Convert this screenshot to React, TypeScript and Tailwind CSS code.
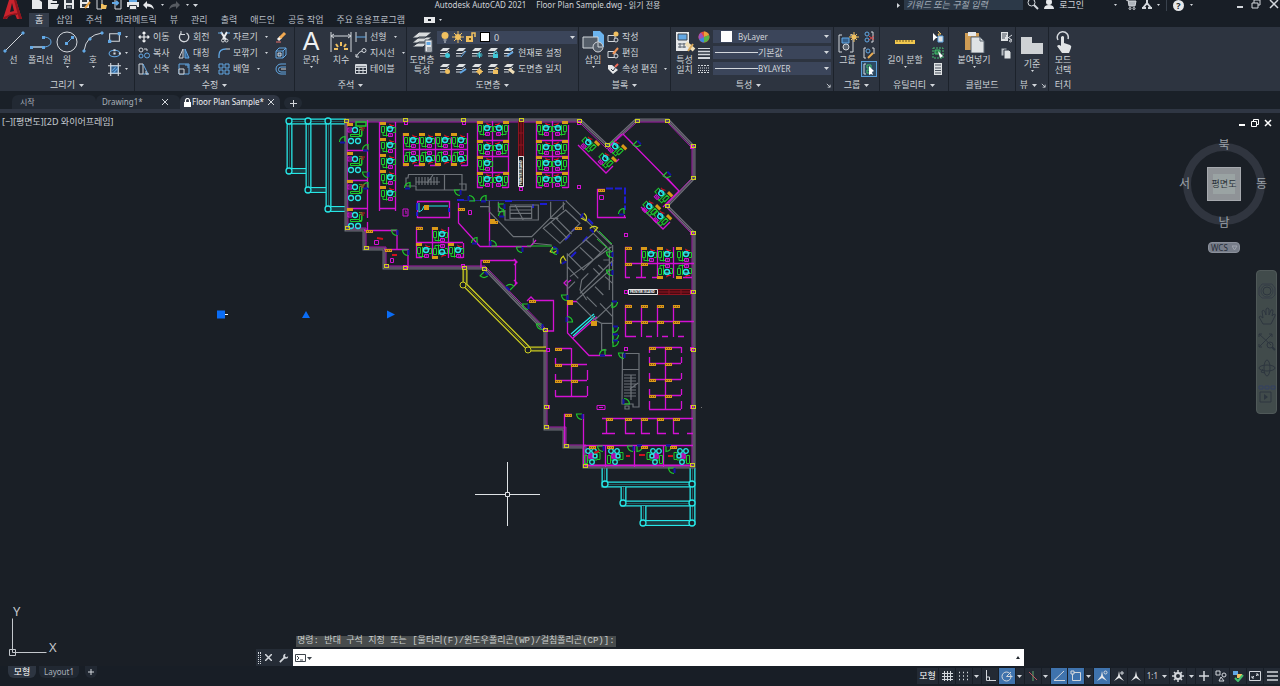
import { ReactNode } from 'react';

type IconProps = {
    children: ReactNode,
    size?: number,
    box?: number
}

function Icon({ children, size = 12, box = 12 }: IconProps) {
    return (
        <svg width={size} height={size} viewBox={`0 0 ${box} ${box}`} fill="none" stroke="#d3d7dc" strokeWidth="1" className="shrink-0" aria-hidden="true">
            {children}
        </svg>
    )
}

function Caret() {
    return (
        <svg width="5" height="3" viewBox="0 0 5 3" className="shrink-0" aria-hidden="true">
            <path d="M0 0h5L2.500 3z" fill="#d3d7dc" />
        </svg>
    )
}

function TinyCaret() {
    return (
        <svg width="3" height="2" viewBox="0 0 3 2" className="shrink-0" aria-hidden="true">
            <path d="M0 0h3L1.500 2z" fill="#d3d7dc" />
        </svg>
    )
}

/* ---------- icons ---------- */

const BLUE = '#62a8e5';
const GOLD = '#f0c060';

const quickIcons: { name: string, art: ReactNode }[] = [
    { name: '새로 만들기', art: <path d="M1 0h6l4 3v7H1z" fill="#e6e8ea" stroke="none" /> },
    { name: '열기', art: <path d="M1 10V1h4l1 1h4v2H4L1 10l2-5h9l-2 5z" fill="#e6e8ea" stroke="none" /> },
    { name: '저장', art: <><path d="M1 0h10v10H1z" fill="#e6e8ea" stroke="none" /><path d="M3 1h6v3H3zM3 6h6v4H3z" fill="#303842" stroke="none" /><path d="M4 8h4" /></> },
    { name: '다른 이름으로 저장', art: <><path d="M1 0h9v9H1z" fill="#e6e8ea" stroke="none" /><path d="M3 1h5v2H3zM3 5h5v3H3z" fill="#303842" stroke="none" /><path d="M6 9l5-6" stroke="#e5a040" strokeWidth="2" /></> },
    { name: '웹에서 열기', art: <><path d="M2 0h5v10H2z" /><path d="M6 9V5h2l1 1h3l-1 4H6z" fill={GOLD} stroke="none" /></> },
    { name: '웹에 저장', art: <><path d="M4 0h6v10H4z" /><path d="M1 4h6M5 2l2 2-2 2" stroke={BLUE} strokeWidth="2" /></> },
    { name: '플롯', art: <><path d="M0 3h12v5H0z" fill="#e6e8ea" stroke="none" /><path d="M2 0h8v3H2z" fill={BLUE} stroke="none" /><path d="M2.500 6.500h7v4h-7z" fill="#e6e8ea" stroke="#303842" /></> },
];

function Undo({ dim }: { dim?: boolean }) {
    return (
        <svg width="12" height="9" viewBox="0 0 12 9" className={dim ? 'shrink-0 -scale-x-100 opacity-30' : 'shrink-0'} aria-hidden="true">
            <path d="M0 4l4-4v2.500q6 0 7 6-2.500-3-7-3V8z" fill="#e6e8ea" />
        </svg>
    )
}

/* sheets of paper stacked, base of every layer icon */
function Sheets({ badge, children }: { badge?: string, children?: ReactNode }) {
    return (
        <Icon>
            <path d="M4 1h7L8 4H1z" fill="#dfe2e4" stroke="none" />
            <path d="M1 6.500h6L10 4M1 9h5" />
            {badge && <circle cx="8.500" cy="8.500" r="2.500" fill={badge} stroke="none" />}
            {children}
        </Icon>
    )
}

const moveIcon = <Icon><path d="M6 1v10M1 6h10M4.500 2.500L6 1l1.500 1.500M4.500 9.500L6 11l1.500-1.500M2.500 4.500L1 6l1.500 1.500M9.500 4.500L11 6 9.500 7.500" stroke="#f0f2f4" strokeWidth="1.200" /></Icon>;
const copyIcon = <Icon><circle cx="3" cy="3" r="2" /><path d="M6 2h3v2" /><circle cx="3" cy="9" r="2" stroke={BLUE} /><circle cx="9" cy="8.500" r="2.500" stroke={BLUE} /></Icon>;
const stretchIcon = <Icon><path d="M1 1h4v10H1z" /><path d="M5 1l5 10H5" stroke={BLUE} /><path d="M8 8v3h3" /></Icon>;
const rotateIcon = <Icon><path d="M8.500 2A4.700 4.700 0 1 1 3 2.500" strokeWidth="1.300" /><path d="M3 0v3.500h4" /></Icon>;
const mirrorIcon = <Icon><path d="M5 2v9H1z" /><path d="M7 2v9h4z" fill="#35608c" stroke={BLUE} /></Icon>;
const scaleIcon = <Icon><path d="M1 1h10v10H1z" stroke={BLUE} /><path d="M1 6h5v5H1z" fill="#2d3440" /><path d="M7 2h3v3" stroke={BLUE} /></Icon>;
const trimIcon = <Icon><path d="M3 1l5 8M9 1L5 8" strokeWidth="2" stroke="#eceef0" /><circle cx="8.500" cy="9.500" r="1.500" /><circle cx="5" cy="9.500" r="1.500" /><path d="M0 2h4M9 2h3" stroke={BLUE} /></Icon>;
const filletIcon = <Icon><path d="M1 11V8q0-6 7-6" stroke={BLUE} strokeWidth="1.300" /><path d="M8 2h4" /></Icon>;
const arrayIcon = <Icon><path d="M1 1h4v4H1zM7 1h4v4H7zM1 7h4v4H1zM7 7h4v4H7z" stroke={BLUE} /></Icon>;
const eraseIcon = <Icon><path d="M1 11h5" stroke="#e96f68" /><path d="M3 9l3-3" stroke="#f7f2ec" strokeWidth="3" /><path d="M5 7l5-5" stroke="#f0a850" strokeWidth="3" /></Icon>;
const explodeIcon = <Icon><path d="M1 4h7v7H1zM1 4l3-3h7v7l-3 3M8 4l3-3" stroke={BLUE} /><path d="M3 6h3v3H3z" fill="#35608c" /></Icon>;
const offsetIcon = <Icon><path d="M11 1H6a5 5 0 0 0 0 10h5M11 4H6a2 2 0 0 0 0 5h5" stroke={BLUE} /><path d="M11 6H6" /></Icon>;

/* ---------- ribbon parts ---------- */

type PanelProps = {
    title: string,
    className: string,
    arrow?: boolean,
    launcher?: boolean,
    children: ReactNode
}

function Panel({ title, className, arrow = true, launcher, children }: PanelProps) {
    return (
        <section aria-label={title} className={`flex shrink-0 flex-col border-r border-[#1c222b] ${className}`}>
            <div className="flex h-[50px]">{children}</div>
            <div className="flex h-[14px] items-center pt-0.5">
                <button className="flex flex-1 items-center justify-center gap-1">
                    {title}
                    {arrow && <Caret />}
                </button>
                {launcher && (
                    <button aria-label={`${title} 설정`} className="pr-0.5">
                        <Icon size={5} box={6}><path d="M1 1l4 4M5 2v3H2" /></Icon>
                    </button>
                )}
            </div>
        </section>
    )
}

type BigButtonProps = {
    label: string,
    second?: string,
    className: string,
    caret?: boolean,
    children: ReactNode
}

function BigButton({ label, second, className, caret, children }: BigButtonProps) {
    return (
        <button className={`flex shrink-0 flex-col items-center pt-1 leading-[10px] whitespace-nowrap ${className}`}>
            <Icon size={22} box={22}>{children}</Icon>
            <span className="mt-0.5">{label}</span>
            {second && <span>{second}</span>}
            {caret && <span className="mt-px"><TinyCaret /></span>}
        </button>
    )
}

type SmallButtonProps = {
    label: string,
    icon: ReactNode,
    caret?: boolean
}

function SmallButton({ label, icon, caret }: SmallButtonProps) {
    return (
        <button className="flex h-4 items-center gap-[3px] whitespace-nowrap">
            {icon}
            {label}
            {caret && <span className="ml-1"><TinyCaret /></span>}
        </button>
    )
}

function IconButton({ label, children, caret }: { label: string, children: ReactNode, caret?: boolean }) {
    return (
        <button aria-label={label} className="flex h-4 items-center gap-1">
            {children}
            {caret && <TinyCaret />}
        </button>
    )
}

function Column({ className = '', children }: { className?: string, children: ReactNode }) {
    return <div className={`flex shrink-0 flex-col pt-0.5 ${className}`}>{children}</div>
}

type RibbonSelectProps = {
    label: string,
    value: string,
    latin?: boolean,
    children?: ReactNode
}

function RibbonSelect({ label, value, latin, children }: RibbonSelectProps) {
    return (
        <label className={`flex h-[13px] min-w-0 items-center bg-[#3b455a] pr-0.5 ${latin ? 'text-[8px]' : ''}`}>
            {children}
            <select aria-label={label} className="h-[13px] min-w-0 flex-1 appearance-none bg-transparent leading-[13px] outline-none">
                <option>{value}</option>
            </select>
            <Caret />
        </label>
    )
}

function Ribbon() {
    return (
        <div className="flex h-16 overflow-hidden bg-[#2d3440]">
            <Panel title="그리기" className="w-[135px]">
                <BigButton label="선" className="w-[27px]">
                    <path d="M2 20L20 2" /><path d="M1 19h2v2H1zM19 1h2v2h-2z" stroke={BLUE} fill={BLUE} />
                </BigButton>
                <BigButton label="폴리선" className="w-[27px]">
                    <path d="M13 6h2q6 1 6 5t-6 5H2" stroke={BLUE} /><path d="M2 16h12" />
                    <path d="M0 15h3v3H0zM12 15h3v3h-3zM12 5h3v3h-3z" stroke="none" fill={BLUE} />
                </BigButton>
                <BigButton label="원" className="w-[26px]" caret>
                    <circle cx="11" cy="11" r="10" /><path d="M11 12l5-5" stroke={BLUE} /><path d="M9 11h3v3H9zM15 5h3v3h-3z" stroke="none" fill={BLUE} />
                </BigButton>
                <BigButton label="호" className="w-[26px]" caret>
                    <path d="M2 20Q4 4 20 2" /><path d="M1 19h2v2H1zM7 7h2v2H7zM19 1h2v2h-2z" stroke={BLUE} fill={BLUE} />
                </BigButton>
                <Column className="pl-0.5">
                    <IconButton label="직사각형" caret><Icon size={13}><path d="M1.500 2.500h9v7h-9z" /><path d="M0 8h3v3H0zM9 1h3v3H9z" fill={BLUE} stroke="none" /></Icon></IconButton>
                    <IconButton label="타원" caret><Icon size={13}><ellipse cx="6" cy="6" rx="5" ry="3" stroke={BLUE} /><path d="M5 5h2v2H5zM10 5h2v2h-2zM5 2h2v2H5z" fill="#d3d7dc" stroke="none" /></Icon></IconButton>
                    <IconButton label="해치" caret><Icon size={13}><path d="M2.500 2.500h7v7h-7z" fill="#35608c" stroke={BLUE} /><path d="M0 2.500h12M0 9.500h12M2.500 0v12M9.500 0v12" /><path d="M4 7l3-3M5 9l4-4" stroke={BLUE} /></Icon></IconButton>
                </Column>
            </Panel>

            <Panel title="수정" className="w-40">
                <Column className="w-10 pl-[3px]">
                    <SmallButton label="이동" icon={moveIcon} />
                    <SmallButton label="복사" icon={copyIcon} />
                    <SmallButton label="신축" icon={stretchIcon} />
                </Column>
                <Column className="w-10 pl-[3px]">
                    <SmallButton label="회전" icon={rotateIcon} />
                    <SmallButton label="대칭" icon={mirrorIcon} />
                    <SmallButton label="축척" icon={scaleIcon} />
                </Column>
                <Column className="w-[60px] pl-[3px]">
                    <SmallButton label="자르기" icon={trimIcon} caret />
                    <SmallButton label="모깎기" icon={filletIcon} caret />
                    <SmallButton label="배열" icon={arrayIcon} caret />
                </Column>
                <Column>
                    <IconButton label="지우기">{eraseIcon}</IconButton>
                    <IconButton label="분해">{explodeIcon}</IconButton>
                    <IconButton label="간격띄우기">{offsetIcon}</IconButton>
                </Column>
            </Panel>

            <Panel title="주석" className="w-28">
                <BigButton label="문자" className="w-8" caret>
                    <text x="11" y="19" textAnchor="middle" fontSize="25" fill="#eef0f2" stroke="none" className="font-['Liberation_Sans',sans-serif]">A</text>
                </BigButton>
                <BigButton label="치수" className="w-7">
                    <path d="M1 1v20M21 1v20M1 5h20M4 3L1 5l3 2M18 3l3 2-3 2" />
                    <path d="M11 11v4M6 13l2 3M16 13l-2 3M4 18h4M14 18h4" stroke={GOLD} strokeWidth="2" />
                </BigButton>
                <Column>
                    <SmallButton label="선형" caret icon={<Icon><path d="M1 1v10M11 1v10" /><path d="M1 6h10" stroke={BLUE} /></Icon>} />
                    <SmallButton label="지시선" caret icon={<Icon><circle cx="9" cy="3.500" r="2" /><path d="M7 4Q4 4 1 10M1 7v3h3" /></Icon>} />
                    <SmallButton label="테이블" icon={<Icon><path d="M.500 1.500h11v9H.500zM.500 4.500h11M.500 7.500h11M4 4.500v6M8 4.500v6" /><path d="M1 2.500h10" strokeWidth="2" /></Icon>} />
                </Column>
            </Panel>

            <Panel title="도면층" className="w-[172px]">
                <BigButton label="도면층" second="특성" className="w-[30px]">
                    <path d="M8 1h13l-7 6H1zM8 6h13l-7 6H1zM8 11h9l-5 5H1z" fill="#d8dbdd" stroke="#2d3440" />
                    <path d="M14 9h7v12h-7z" fill="#e6e8ea" stroke="#59636e" /><path d="M15.500 11h4v3h-4z" fill={BLUE} stroke="none" /><path d="M16 17h4M16 19h4" stroke="#59636e" />
                </BigButton>
                <div className="flex min-w-0 flex-1 flex-col pt-0.5 pr-px">
                    <div className="flex h-4 flex-col justify-center">
                        <RibbonSelect label="도면층 선택" value="0">
                            <span className="flex gap-px pr-1 pl-0.5">
                                <Icon><circle cx="6" cy="4.500" r="3.500" fill={GOLD} stroke="none" /><path d="M4.500 9h3M5 11h2" /></Icon>
                                <Icon><circle cx="6" cy="6" r="3" fill={GOLD} stroke="none" /><path d="M6 0v12M0 6h12M2 2l8 8M10 2l-8 8" stroke={GOLD} /></Icon>
                                <Icon><path d="M1 5h7v6H1z" fill={GOLD} stroke="none" /><path d="M7 5V2h3v4" stroke={GOLD} strokeWidth="1.500" /><path d="M4 7h2v2H4z" fill="#6b4f14" stroke="none" /></Icon>
                                <span className="ml-0.5 size-[10px] self-center border border-black bg-white" />
                            </span>
                        </RibbonSelect>
                    </div>
                    <div className="flex h-4 items-center gap-1 pl-0.5 whitespace-nowrap">
                        <button aria-label="끄기"><Sheets badge="#3fc8d8" /></button>
                        <button aria-label="분리"><Sheets><path d="M6 10l5-6" stroke={BLUE} /></Sheets></button>
                        <button aria-label="동결"><Sheets><path d="M8.500 5v6M5.500 8h6M6.500 6l4 4M10.500 6l-4 4" stroke="#3fc8d8" /></Sheets></button>
                        <button aria-label="잠금"><Sheets><path d="M6 7h5v4H6z" fill="#3fc8d8" stroke="none" /><path d="M7 7V5h3v2" stroke="#3fc8d8" /></Sheets></button>
                        <button className="flex items-center gap-[3px]"><Sheets><path d="M6 1l2 2M4 9l6-4" stroke={BLUE} strokeWidth="2" /></Sheets>현재로 설정</button>
                    </div>
                    <div className="flex h-4 items-center gap-1 pl-0.5 whitespace-nowrap">
                        <button aria-label="모두 켜기"><Sheets badge={GOLD} /></button>
                        <button aria-label="분리 해제"><Sheets><path d="M5 10l6-4" stroke={BLUE} strokeWidth="2" /></Sheets></button>
                        <button aria-label="모두 동결 해제"><Sheets badge={GOLD}><path d="M8.500 5v7M5 8.500h7" stroke={GOLD} /></Sheets></button>
                        <button aria-label="잠금 해제"><Sheets><path d="M6 7h5v4H6z" fill={GOLD} stroke="none" /><path d="M9 7V5h2v1" stroke={GOLD} /></Sheets></button>
                        <button className="flex items-center gap-[3px]"><Sheets><path d="M6 6l5 4" stroke="#f0dfb8" strokeWidth="3" /></Sheets>도면층 일치</button>
                    </div>
                </div>
            </Panel>

            <Panel title="블록" className="w-[92px]">
                <BigButton label="삽입" className="w-7" caret>
                    <path d="M11 0h7l4 4v12H11z" fill="#6cb4ee" stroke="none" /><path d="M1 6h15v11H1z" fill="#555e69" /><circle cx="16" cy="16" r="5" fill="#555e69" /><path d="M16 12v4h4" />
                </BigButton>
                <Column>
                    <SmallButton label="작성" icon={<Icon><path d="M1 4.500h7v6H1z" /><circle cx="9" cy="9" r="2" fill="#2d3440" /><circle cx="9" cy="3" r="2.500" fill={GOLD} stroke="none" /></Icon>} />
                    <SmallButton label="편집" icon={<Icon><path d="M1 4.500h7v6H1z" /><circle cx="9" cy="9" r="2" fill="#2d3440" /><path d="M6 7l5-6" stroke="#ee9358" strokeWidth="2" /></Icon>} />
                    <SmallButton label="속성 편집" caret icon={<Icon><path d="M1 2h4l6 5-5 4-5-5z" fill="#e6e8ea" stroke="none" /><path d="M4 6l2 2 3-4" stroke="#2d3440" /><path d="M8 4l3-3" stroke="#ee6b58" strokeWidth="2" /></Icon>} />
                </Column>
            </Panel>

            <Panel title="특성" className="w-[163px]" launcher>
                <BigButton label="특성" second="일치" className="w-[27px]">
                    <path d="M2 1h13v19H2z" fill="#e6e8ea" stroke="none" /><path d="M4 3h9v6H4z" fill={BLUE} stroke="#3c4652" /><path d="M4 13h8M4 16h8M6 12v5M10 12v5" stroke="#59636e" /><path d="M12 12l8 7" stroke="#f0dfb8" strokeWidth="4" /><path d="M19 13l-5 7" stroke="#d9a95a" strokeWidth="2" />
                </BigButton>
                <Column className="w-[15px]">
                    <IconButton label="색상">
                        <Icon>
                            <circle cx="6" cy="6" r="5.500" fill="#e14c3c" stroke="none" />
                            <path d="M6 6V.500a5.500 5.500 0 0 1 5 3.500z" fill="#e9a13b" stroke="none" />
                            <path d="M6 6l5-2A5.500 5.500 0 0 1 6 11.500z" fill="#58b548" stroke="none" />
                            <path d="M6 6v5.500a5.500 5.500 0 0 1-5-3.500z" fill="#3f87dd" stroke="none" />
                            <path d="M6 6L1 8A5.500 5.500 0 0 1 3 1.500z" fill="#9a52c0" stroke="none" />
                        </Icon>
                    </IconButton>
                    <IconButton label="선가중치"><Icon><path d="M0 1.500h12" /><path d="M0 4.500h12M0 7.500h12" strokeWidth="1.500" /><path d="M0 11h12" strokeWidth="2" /></Icon></IconButton>
                    <IconButton label="선종류"><Icon><path d="M0 2.500h12M0 9.500h12" strokeDasharray="2 1" /><path d="M0 5h12M0 7.500h12" strokeDasharray="1 1" /></Icon></IconButton>
                </Column>
                <div className="flex min-w-0 flex-1 flex-col gap-[3px] pt-[3px] pr-0.5">
                    <RibbonSelect label="객체 색상" value="ByLayer" latin><span className="mr-1.5 ml-2 size-[11px] bg-white" /></RibbonSelect>
                    <RibbonSelect label="선가중치" value="기본값"><span className="ml-0.5 h-px w-[43px] bg-[#d3d7dc]" /></RibbonSelect>
                    <RibbonSelect label="선종류" value="BYLAYER" latin><span className="ml-0.5 h-px w-[43px] bg-[#d3d7dc]" /></RibbonSelect>
                </div>
            </Panel>

            <Panel title="그룹" className="w-[46px]">
                <BigButton label="그룹" className="w-[27px]">
                    <path d="M5 4H2v17h3M13 4h3v17h-3" /><path d="M5 7h7v5H5z" fill="#35608c" stroke={BLUE} /><circle cx="9" cy="16" r="3" fill="#59636e" /><path d="M17 1v10M12 6h10M14 3l6 6M20 3l-6 6" stroke={GOLD} /><circle cx="17" cy="6" r="2.500" fill={GOLD} stroke="none" />
                </BigButton>
                <Column>
                    <span className="flex flex-col items-center">
                        <IconButton label="그룹 해제"><Icon><path d="M8 1h2v10H8" /><circle cx="4" cy="3" r="2" stroke={BLUE} /><circle cx="4" cy="9" r="2" stroke={BLUE} /><path d="M6 5l5 4M11 5l-5 4" stroke="#e04848" /></Icon></IconButton>
                        <IconButton label="그룹 편집"><Icon><path d="M3 1H1v10h2M9 1h2v6" /><circle cx="5" cy="4" r="2" stroke={BLUE} /><path d="M5 11l5-5" stroke="#e8aa50" strokeWidth="2" /></Icon></IconButton>
                        <button aria-label="그룹 선택" className="border border-[#5aa0dc] bg-[#2d4a63] p-px"><Icon><path d="M3 1H1v10h2" /><path d="M4 2h4v3H4zM4 7h3v3H4z" stroke="#45c070" /><path d="M6 3l5 5-2 1 1 3-2-1-2 1z" fill="#fff" stroke="none" /></Icon></button>
                    </span>
                </Column>
            </Panel>

            <Panel title="유틸리티" className="w-[69px]">
                <BigButton label="길이 분할" className="w-[50px]" caret>
                    <path d="M1 9h20v4H1z" fill="#f2c84e" stroke="none" /><path d="M3 9v2M6 9v2M9 9v2M12 9v2M15 9v2M18 9v2" stroke="#6e5a20" />
                </BigButton>
                <Column className="pl-0.5">
                    <IconButton label="신속 선택"><Icon><path d="M1 2v8l3-3h2z" fill="#fff" stroke="none" /><path d="M6 5h5v6H6z" fill="#dfe2e4" stroke={BLUE} /><path d="M6 0l3 3H6l1 2" stroke={GOLD} /></Icon></IconButton>
                    <IconButton label="모두 선택"><Icon><path d="M1 1h10v10H1z" stroke="#45c070" strokeDasharray="2 1" /><path d="M3 3h5v4H3z" fill="#2b7a48" stroke="#45c070" /><path d="M6 4l5 5-3 2z" fill="#fff" stroke="none" /></Icon></IconButton>
                    <IconButton label="계산기"><Icon><path d="M2 0h8v12H2z" fill="#dfe2e4" stroke="none" /><path d="M3 2h6M3 5h6M3 7.500h6M3 10h6" stroke="#48515c" /></Icon></IconButton>
                </Column>
            </Panel>

            <Panel title="클립보드" className="w-[67px]" arrow={false}>
                <BigButton label="붙여넣기" className="w-[50px]" caret>
                    <path d="M2 2h14v17H2z" fill="#cf9c54" stroke="none" /><path d="M5 1h8v4H5z" fill="#e6e8ea" stroke="none" /><path d="M8 6h9l4 4v12H8z" fill="#dfe2e4" stroke="#59636e" /><path d="M17 6v4h4" stroke="#59636e" />
                </BigButton>
                <Column className="pl-px">
                    <IconButton label="잘라내기"><Icon><path d="M1 1h7v9H1z" fill="#dfe2e4" stroke="none" /><path d="M2 3h5M2 5h4M2 7h3" stroke="#48515c" /><path d="M5 9l7-5M6 5l6 4" /><circle cx="10.500" cy="10" r="1" /></Icon></IconButton>
                    <IconButton label="클립 복사"><Icon><path d="M1 1h6v8H1z" fill="#b7bcc2" stroke="#2d3440" /><path d="M4 3h5l2 2v7H4z" fill="#dfe2e4" stroke="#2d3440" /></Icon></IconButton>
                </Column>
            </Panel>

            <Panel title="뷰" className="w-[33px]" launcher>
                <BigButton label="기준" className="w-8 pt-2" caret>
                    <path d="M0 2h11v6h11v11H0z" fill="#cfd2d5" stroke="none" />
                </BigButton>
            </Panel>

            <section aria-label="터치" className="flex w-7 flex-col items-center">
                <div className="h-[50px]">
                    <BigButton label="모드" second="선택" className="w-7">
                        <path d="M6 9a5.500 5.500 0 1 1 10-1" strokeWidth="1.500" /><path d="M9 6q2-2 3 0v6l6 2q2 1 1 3l-2 5h-7l-5-7q2-2 4 0z" fill="#e1e4e6" stroke="none" />
                    </BigButton>
                </div>
                <span className="flex h-[14px] items-center pt-0.5">터치</span>
            </section>
        </div>
    )
}

/* ---------- window header ---------- */

const menus = ['삽입', '주석', '파라메트릭', '뷰', '관리', '출력', '애드인', '공동 작업', '주요 응용프로그램'];

function Header() {
    return (
        <header className="flex h-[27px] overflow-hidden bg-[#181e26]">
            <button aria-label="응용프로그램 메뉴" className="w-[29px] shrink-0 self-start pl-[3px]">
                <svg width="19" height="20" viewBox="0 0 19 20" aria-hidden="true">
                    <path d="M6 0h7l6 19h-5l-2-5-6 1-2 4H0z" fill="#c9232d" />
                    <path d="M9 3l2 8-4 1z" fill="#181e26" />
                    <path d="M1 17q8-4 14-4l-1 2q-6-1-11 4H0zM13 0l6 19h-3L11 0z" fill="#8f141d" />
                </svg>
            </button>
            <div className="flex min-w-0 flex-1 flex-col">
                <div className="flex h-[10px] items-center leading-[10px] whitespace-nowrap">
                    <div className="flex items-center gap-1 pl-0.5">
                        {quickIcons.map(q => (
                            <button key={q.name} aria-label={q.name}><Icon>{q.art}</Icon></button>
                        ))}
                        <button aria-label="명령 취소" className="flex items-center gap-1.5"><Undo /><TinyCaret /></button>
                        <button aria-label="명령 복구" className="flex items-center gap-1.5"><Undo dim /><TinyCaret /></button>
                        <button aria-label="도구막대 사용자화"><Caret /></button>
                    </div>
                    <div className="flex flex-1 justify-center gap-2.5 text-[8px]">
                        <span>Autodesk AutoCAD 2021</span>
                        <span>Floor Plan Sample.dwg - 읽기 전용</span>
                    </div>
                    <div className="flex items-center">
                        <svg width="3" height="5" viewBox="0 0 3 5" aria-hidden="true"><path d="M0 0l3 2.500L0 5z" fill="#d3d7dc" /></svg>
                        <input aria-label="검색" placeholder="키워드 또는 구절 입력" className="ml-1 h-[10px] w-[119px] bg-[#2c3948] px-0.5 leading-[10px] italic outline-none placeholder:text-[#a5afba]" />
                        <button aria-label="찾기" className="ml-1"><Icon><circle cx="4.500" cy="3.500" r="3.500" /><path d="M7 6l4 4" strokeWidth="2" /></Icon></button>
                        <button className="ml-1 flex items-center gap-1"><Icon><circle cx="6" cy="3" r="3" fill="#e6e8ea" stroke="none" /><path d="M1 10q0-4 5-4t5 4z" fill="#e6e8ea" stroke="none" /></Icon>로그인</button>
                        <span className="ml-[30px]"><TinyCaret /></span>
                        <button aria-label="앱 스토어" className="ml-2"><Icon><path d="M1 1h2l1 6h6l1-5H3" fill="#aeb4bb" /><circle cx="5" cy="9.500" r="1" /><circle cx="9" cy="9.500" r="1" /></Icon></button>
                        <button aria-label="연결" className="ml-1 flex items-center gap-1"><Icon><path d="M6 1v3L2 9M6 4l4 5M1 9h4M7 9h4" strokeWidth="2" /></Icon><TinyCaret /></button>
                        <span className="ml-1.5 h-3 w-px bg-[#39424d]" />
                        <button aria-label="도움말" className="ml-1.5 flex items-center gap-1.5"><span className="size-[11px] rounded-full bg-[#e6e8ea] text-center leading-[11px] font-bold text-[#181e26]">?</span><TinyCaret /></button>
                        <button aria-label="최소화" className="ml-[41px]"><Icon><path d="M3 8h6" strokeWidth="2" /></Icon></button>
                        <button aria-label="복원" className="ml-1"><Icon><path d="M2 4h6v5H2zM4 4V1h6v5H8" /></Icon></button>
                        <button aria-label="닫기" className="ml-1.5"><Icon><path d="M2 1l8 8M10 1L2 9" strokeWidth="1.500" /></Icon></button>
                    </div>
                </div>
                <nav className="flex h-[17px] items-end gap-px whitespace-nowrap text-[#b9bfc7]">
                    <a href="#home" className="flex h-[14px] items-center bg-[#343c4a] px-1.5 text-[#e6e9ec]">홈</a>
                    {menus.map(m => (
                        <a key={m} href="#menu" className="flex h-[14px] items-center px-1.5">{m}</a>
                    ))}
                    <button aria-label="리본 최소화" className="ml-3 flex h-[14px] items-center gap-1">
                        <span className="flex h-[6px] w-[11px] items-center justify-center bg-[#e6e8ea]"><span className="h-0.5 w-[3px] bg-[#181e26]" /></span>
                        <TinyCaret />
                    </button>
                </nav>
            </div>
        </header>
    )
}

function FileTabs() {
    return (
        <div className="flex h-[18px] items-end bg-[#1a2028] pl-3 text-[8px] whitespace-nowrap">
            <button className="h-[14px] w-[84px] rounded-t-md bg-[#222933] pl-2 text-left leading-[14px] text-[#aab1ba]">시작</button>
            <div className="flex h-[14px] w-[84px] items-center justify-between rounded-t-md bg-[#222933] pr-3 pl-1.5 text-[#aab1ba]">
                <button>Drawing1*</button>
                <button aria-label="Drawing1 닫기"><Icon size={6} box={6}><path d="M0 0l6 6M6 0L0 6" /></Icon></button>
            </div>
            <div className="flex h-[14px] w-[100px] items-center rounded-t-md bg-[#2f3643] pl-1 text-[#eef0f3]">
                <svg width="7" height="9" viewBox="0 0 7 9" fill="none" className="mr-px shrink-0" aria-hidden="true">
                    <path d="M0 4h7v5H0z" fill="#fff" /><path d="M1.500 4V2.500a2 2 0 0 1 4 0V4" stroke="#fff" strokeWidth="1.200" />
                </svg>
                <button>Floor Plan Sample*</button>
                <button aria-label="Floor Plan Sample 닫기" className="ml-1"><Icon size={6} box={6}><path d="M0 0l6 6M6 0L0 6" /></Icon></button>
            </div>
            <button aria-label="새 도면" className="ml-1 flex h-3 w-[18px] items-center justify-center self-end rounded-md bg-[#222933]"><Icon size={7} box={7}><path d="M3.500 0v7M0 3.500h7" /></Icon></button>
        </div>
    )
}

/* ---------- floor plan ---------- */

const MAGENTA = '#d411d4';
const GREEN = '#1fc92c';
const CYAN = '#27e6e6';
const YELLOW = '#cfcf20';
const GRAY = '#6d7278';
const PAPER = '#1a1f26';

/* wall drawn as parallel lines */
function Tube({ d, color, width = 6 }: { d: string, color: string, width?: number }) {
    return (
        <>
            <path d={d} stroke={color} strokeWidth={width} />
            <path d={d} stroke={PAPER} strokeWidth={width - 2.6} />
            <path d={d} stroke={color} strokeWidth="1" opacity=".3" />
        </>
    )
}

function Tag({ x, y }: { x: number, y: number }) {
    return (
        <>
            <rect x={x} y={y} width="7" height="3" fill="#d99a18" />
            <path d={`M${x + 1} ${y + 1.5}h5`} stroke="#8a4a10" strokeDasharray="1 1" />
        </>
    )
}

function Station({ x, y, flip, mirror }: { x: number, y: number, flip?: boolean, mirror?: boolean }) {
    const sx = mirror ? -1 : 1;
    const sy = flip ? -1 : 1;
    return (
        <g transform={`translate(${mirror ? x + 16 : x} ${flip ? y + 16 : y}) scale(${sx} ${sy})`}>
            <path d="M1.500 4.500h3v6h-3zM6.500 4v10.500M13 5.500h2.500v5H13M8 13.500h-5v-3" stroke={GREEN} />
            <path d="M7 6h7" stroke={CYAN} />
            <circle cx="10" cy="7" r="2.500" stroke={CYAN} strokeWidth="1.400" />
            <path d="M8.500 11.500h4v3h-4zM9.500 13h2" stroke={MAGENTA} />
            <path d="M9 2l3 1.500M10 3.500h4" stroke="#d01020" />
            <rect x="0" y="0" width="6" height="3" fill="#d99a18" />
        </g>
    )
}

function Office({ x, y }: { x: number, y: number }) {
    return (
        <g transform={`translate(${x} ${y})`}>
            <rect x="1" y="1" width="6" height="3" fill="#d99a18" />
            <path d="M4.500 12.500h9v-5h2v7h-11zM13 5.500h3v8h-3" stroke={GREEN} />
            <path d="M2 6h4v4H2zM3 8h2" stroke={MAGENTA} />
            <path d="M14 6h5M15 8h3" stroke="#d01020" />
            <g stroke={CYAN} strokeWidth="1.300">
                <circle cx="9" cy="8" r="2.500" />
                <circle cx="5" cy="19" r="2.500" />
                <circle cx="12" cy="19" r="2.500" />
            </g>
        </g>
    )
}

function Meeting({ x, y, mirror }: { x: number, y: number, mirror?: boolean }) {
    return (
        <g transform={`translate(${x} ${y}) scale(${mirror ? -1 : 1} 1)`}>
            <path d="M.500 9.500h3v8h-3zM13 6.500h3v7h-3zM4 14h9" stroke={GREEN} />
            <path d="M5 8h4v4H5zM6 10h3" stroke={MAGENTA} strokeWidth="1.500" />
            <g stroke={CYAN} strokeWidth="1.300">
                <circle cx="4" cy="5" r="2.300" />
                <circle cx="10" cy="5" r="2.300" />
                <circle cx="11" cy="10" r="2" />
                <circle cx="8" cy="16" r="2.300" />
            </g>
        </g>
    )
}

function Door({ x, y, turn = 0, color = GREEN }: { x: number, y: number, turn?: number, color?: string }) {
    return (
        <g transform={`translate(${x} ${y}) rotate(${turn})`}>
            <path d="M0 0v5.500a6 6 0 0 0 5.500-5.500" stroke={color} strokeWidth="1.200" />
            <path d="M0-.500h5" stroke="#1414a8" strokeWidth="2" />
        </g>
    )
}

const wall = 'M346 120H580L608 146L636 120H668L694 147V178L667 206L694 233V467H584V447H564V429H545V331L484 268H384V249H364V230H346Z';

const corners = [
    [346, 121], [405, 120], [463, 120], [521, 120], [579, 121], [607, 145], [637, 121], [667, 121], [693, 146], [693, 178],
    [667, 206], [693, 233], [693, 292], [693, 350], [693, 407], [692, 465], [585, 466], [566, 446], [546, 427], [546, 407],
    [545, 330], [484, 269], [464, 268], [405, 268], [386, 266], [366, 248], [347, 228],
];

const columns = [
    [404, 121], [462, 121], [577, 121], [519, 187], [577, 185], [624, 233], [624, 290], [624, 347], [690, 145], [690, 231],
    [690, 290], [690, 347], [690, 405], [546, 348], [546, 405], [403, 265], [461, 264],
];

const doors: [number, number, number][] = [
    [345, 142, 180], [368, 150, 180], [368, 172, 90], [368, 188, 180], [397, 230, 90], [408, 250, 90], [460, 190, 90], [410, 188, 180],
    [469, 201, 270], [486, 201, 180], [477, 243, 180], [491, 246, 270], [504, 204, 90], [504, 216, 180], [522, 247, 90],
    [612, 252, 90], [612, 270, 90], [567, 295, 90], [567, 322, 270], [612, 302, 0], [613, 327, 0], [613, 335, 0], [613, 341, 0],
    [605, 355, 180], [624, 353, 90], [484, 272, 45], [510, 290, 225], [528, 304, 90], [542, 324, 90], [624, 214, 180],
    [637, 141, 45], [667, 172, 45], [582, 414, 90], [603, 446, 90], [633, 446, 90], [637, 446, 0], [666, 446, 0], [674, 468, 90],
    [624, 404, 270], [557, 249, 90],
];

function FloorPlan() {
    return (
        <g fill="none" strokeWidth="1">
            {/* terraces */}
            <Tube color={CYAN} d="M289.500 121v50H309" />
            <Tube color={CYAN} d="M308.500 121v69H328" />
            <Tube color={CYAN} d="M287 121.500H346M328.500 121v88H346" />
            <Tube color={CYAN} d="M604.500 468v16.500H693" />
            <Tube color={CYAN} d="M623.500 487v16.500H693" />
            <Tube color={CYAN} d="M643.500 506v17H693" />
            <Tube color={CYAN} d="M692.500 468v57" />
            <g stroke={CYAN} strokeWidth="1.300" fill={PAPER}>
                {[[289, 121], [308, 121], [328, 121], [289, 171], [308, 190], [328, 209], [605, 484], [692, 484], [623, 503], [692, 503], [643, 523], [692, 523]].map(([x, y]) => (
                    <circle key={`${x}-${y}`} cx={x} cy={y} r="3" />
                ))}
            </g>

            {/* outer walls */}
            <path d={wall} stroke={GRAY} strokeWidth="3" />
            <path d={wall} stroke="#4b3352" strokeWidth="1" />
            <path d="M347 122H579L607 149L637 122H667L692 148V178L665 206L692 234V465H586V445H566V427H547V330L485 266H386V247H366V228H348Z" stroke="#a51bab" />
            <Tube color={YELLOW} width={5} d="M465 270V285L529 349H546" />
            <g stroke={YELLOW} fill={PAPER}><circle cx="463" cy="285" r="3" /><circle cx="528" cy="350" r="3" /></g>

            {/* rooms */}
            <g stroke={MAGENTA} strokeWidth="1.300">
                <path d="M367.500 120V218M347 150.500H368M347 180.500H368M347 208.500H368M367.500 222V230M379.500 122V211M395.500 122V211M380 208.500H395M364 230.500H397V249M384 249.500H408V268" />
                <path d="M403.500 133V166M419.500 137V166M435.500 137V166M451.500 137V166M467.500 133V166M403 149.500H467M403 165.500H408M414 165.500H424M430 165.500H440M461 165.500H467" />
                <path d="M417.500 201.500H449.500V217.500H417.500zM416.500 227V258M432.500 227V258M448.500 227V258M463.500 243V258M416 242.500H463M416 227.500H422M416 257.500H422M458 257.500H463" />
                <path d="M458.500 203V223L480 246.500H530L534 243M489.500 207V246M481 268V260.500H515.500V285M534 300.500H553.500V331H545M530 247L536 240M514 259l3 3-3 3M514 280l3 3-3 3M527 301l4-4 4 4" />
                <path d="M477.500 121V188M492.500 121V188M508.500 125V188M536.500 121V188M552.500 121V188M568.500 125V188M477 140.500H508M477 156.500H508M477 172.500H508M477 187.500H483M502 187.500H508M536 140.500H568M536 156.500H568M536 172.500H568M536 187.500H542M562 187.500H568" />
                <path d="M597 189.500H605M597.500 189V217.500H626M624.500 215V217M623 134L679 191L663 207M622 134L610 146M679 191L667 178M623 134L633 144M578 145L606 173L613 166M616 162L619 159M641 207L663 229L670 222" />
                <path d="M625.500 247V278M641.500 247V278M657.500 247V278M673.500 247V278M625 263.500H694M625 277.500H630M636 277.500H646M652 277.500H662M683 277.500H692M625 247.500H631" />
                <path d="M625.500 305V337M641.500 305V337M657.500 305V337M673.500 305V337M625 321.500H694M625 305.500H631M625 336.500H636M646 336.500H652M662 336.500H668M678 336.500H684" />
                <path d="M649.500 347V353M665.500 347V409M681.500 347V353M649 347.500H681M649 363.500H681M649 379.500H681M649 395.500H681M649 409.500H681M649.500 357V363M681.500 357V363M649.500 373V379M681.500 373V379M649.500 389V395M681.500 389V395M649.500 401V409M681.500 401V409" />
                <path d="M571.500 348V396M555 348.500H571M555 364.500H587M555 380.500H587M555 396.500H587M555.500 358V364M555.500 374V380M555.500 390V396M587.500 370V380M587.500 386V396" />
                <path d="M602 418.500H693M606.500 418V434M625.500 418V434M641.500 418V434M657.500 418V434M673.500 418V434M602 433.500H615M625 433.500H635M641 433.500H650M657 433.500H666M673 433.500H679M687 433.500H693" />
                <path d="M564.500 414V447M583.500 414V467M564 414.500H572M583 445.500H693M605.500 446V467M634.500 446V467M663.500 446V467M585 465.500H692" />
                <path d="M567.500 283V333L589 355.500H612M573 338L597 317M567 301.500H577M567 283L571 280M567 286l-3-3 3-3" />
            </g>
            <path d="M571 334L594 314M573 336L595 316" stroke={CYAN} strokeWidth="1.300" />
            <path d="M419 203v9q4-1 5-6h24" stroke={CYAN} />
            <path d="M457 200.500H567" stroke="#2a2a8c" />
            <path d="M457 200H465M505 201H512M533 204V208M540 204H548M417 203V216M449 208V212M606 188.500H625V210M565 240L570 235M572 231L577 227M583 242L588 236M571 257L576 252M588 219L594 225M612 262V266" stroke="#1d1dd0" strokeWidth="2" strokeDasharray="7 2" />

            {/* stairs and lift core */}
            <g transform="translate(480 110) scale(.3333)" stroke={GRAY} strokeWidth="3.500">
                <path d="M0 290H28M28 272L28 305L100 380H155L255 280M55 275V305H75M90 285H175V330H75V300M90 290H155V325H90zM90 300H155M90 310H155M105 285L130 330" />
                <path d="M212 275V325H235M250 275V300M257 272L395 405M257 300L300 340L240 400L190 355zM212 335L262 385M225 322L275 372M160 385V400L215 405" />
                <path d="M340 370L380 410L310 480L265 435zM318 390L362 428M300 412L340 450M262 430V570M270 500L395 410M262 470L295 505" />
                <path d="M398 405V700M388 410V540M370 450H388M355 465L370 480M340 475L360 495M325 490L305 510L300 540L320 570M285 515L265 535M300 550L400 450" />
                <path d="M290 570L390 480M320 560L350 590M345 530L370 555M375 500L398 520M290 575L345 630L398 580M345 630L365 640H398M365 640V720H380M360 580L398 620" />
            </g>
            <g stroke={GRAY} strokeWidth="1.200">
                <path d="M408.500 174.500H462V190H416V186H406V178H408zM444.500 174V190M416 177V185M419 177V185M422 177V185M425 177V185M428 177V185M431 177V185M434 177V185M437 177V185M416 182H440M427 183L433 175M459 184H466V190H459" />
                <path d="M622.500 353.500H639V407H633V404H622zM622 369.500H639M631 375V400M624 375H636M624 378H636M624 381H636M624 384H636M624 387H636M624 390H636M624 393H636M624 396H636M630 389L638 383M625 406H629V409H625z" />
            </g>
            <path d="M597 239L612 252M527 246H552M599 231L612 244" stroke={GREEN} />
            <Door x={581} y={218} turn={-60} color={YELLOW} />
            <Door x={594} y={232} turn={220} color={YELLOW} />
            <Door x={553} y={247} turn={30} color={YELLOW} />
            <Door x={566} y={261} turn={150} color={YELLOW} />

            {doors.map(([x, y, turn]) => <Door key={`${x}-${y}`} x={x} y={y} turn={turn} />)}

            {/* furniture */}
            {[122, 151, 179, 207].map(y => <Office key={y} x={346} y={y} />)}
            <path d="M356 122h10v4h-10z" stroke={GREEN} strokeWidth="1.500" />
            {[122, 138, 154, 170, 186].map(y => <Station key={y} x={380} y={y} />)}
            {[403, 419, 435, 451].map(x => (
                <g key={x}>
                    <Station x={x} y={133} />
                    <Station x={x} y={150} flip />
                </g>
            ))}
            {[477, 536].map(x => [121, 140, 156, 172].map(y => (
                <g key={`${x}-${y}`}>
                    <Station x={x} y={y} />
                    {!(x === 477 && y === 156) && <Station x={x + 16} y={y} mirror />}
                </g>
            )))}
            <Station x={432} y={227} />
            <Station x={416} y={243} />
            <Station x={432} y={243} flip />
            <Station x={448} y={243} />
            <Station x={641} y={247} />
            <Station x={657} y={247} />
            <Station x={676} y={247} />
            <Station x={657} y={263} flip />
            <Station x={676} y={263} flip />
            {[[589, 133], [606, 149], [616, 137], [662, 184], [650, 197], [661, 207]].map(([x, y]) => (
                <g key={`${x}-${y}`} transform={`rotate(45 ${x} ${y})`}><Station x={x} y={y} mirror /></g>
            ))}
            <Meeting x={584} y={446} />
            <Meeting x={607} y={446} />
            <Meeting x={663} y={446} mirror />
            <Meeting x={690} y={446} mirror />
            <path d="M594 453l5-2M626 456h4M639 455h6M668 456h5M377 238l6 1M392 255h5" stroke="#d01020" strokeWidth="2" />
            {[
                [366, 230], [385, 249], [416, 227], [458, 208], [483, 260], [529, 300], [598, 189], [575, 227], [491, 221],
                [625, 247], [625, 263], [641, 263], [625, 305], [641, 305], [657, 305], [673, 305], [625, 321], [641, 321], [657, 321], [673, 321],
                [649, 347], [665, 347], [649, 363], [665, 363], [649, 379], [665, 379], [649, 395], [665, 395],
                [555, 348], [555, 364], [571, 364], [555, 380], [571, 380], [565, 414], [606, 418], [625, 418], [641, 418], [657, 418], [673, 418],
                [589, 446], [607, 446], [641, 446], [670, 446],
            ].map(([x, y]) => <Tag key={`${x}-${y}`} x={x} y={y} />)}
            <path d="M424 205h5v5h-5zM490 219h5v5h-5zM567 300h6v5h-6zM591 321h6v5h-6z" fill="#d99a18" />
            <path d="M374.500 240.500h4v4h-4zM390.500 258.500h3v4h-3zM468.500 210.500h3v4h-3zM599.500 195.500h4v4h-4zM403 209h5v7h-5zM405 211h1v3M597 405.500h8v4h-8zM599 407.500h4" stroke={MAGENTA} />

            {/* printer islands */}
            <path d="M518.500 121h5v36h-5zM521 121v36M518 133h6M518 145h6" fill="#4a0a12" stroke="#8e1420" />
            <path d="M518.500 156.500h5v30h-5z" fill={PAPER} stroke="#e6e6e6" />
            <text x="-185" y="522" transform="rotate(-90)" fontSize="3" fontWeight="bold" fill="#fff">PRINTER ISLAND</text>
            <path d="M657.500 289.500h33v5h-33zM657 292h34M669 289v6M681 289v6" fill="#4a0a12" stroke="#8e1420" />
            <path d="M628.500 289.500h29v5h-29z" fill={PAPER} stroke="#e6e6e6" />
            <text x="630" y="293" fontSize="3" fontWeight="bold" fill="#fff">PRINTER ISLAND</text>

            {columns.map(([x, y]) => <rect key={`${x}-${y}`} x={x + 0.5} y={y + 0.5} width="3" height="3" stroke={MAGENTA} />)}
            {corners.map(([x, y]) => <rect key={`${x}-${y}`} x={x - 1.5} y={y - 1.5} width="4" height="3" stroke={YELLOW} />)}
        </g>
    )
}

function NavBar() {
    return (
        <div className="absolute top-[157px] right-[3px] flex w-[21px] flex-col items-center gap-2 rounded-sm border border-[#56605f] bg-[#465050] py-2.5 opacity-90">
            <button aria-label="휠"><Icon size={18} box={18}><path d="M4 3h10l3 4v7l-3 3H4l-3-3V7z" stroke="#38414a" /><circle cx="9" cy="10" r="4" stroke="#303942" /><circle cx="9" cy="10" r="6" stroke="#38414a" /></Icon></button>
            <button aria-label="초점이동"><Icon size={18} box={18}><path d="M5 17l-4-7q1-2 4 1L4 4q2-2 3 1l1 3V2q2-2 3 0v6l2-5q2-1 2 1l-1 5 2-2q2 0 1 2l-4 8z" stroke="#303942" /></Icon></button>
            <button aria-label="줌"><Icon size={18} box={18}><path d="M1 1l12 11M14 1L1 14M1 4V1h3M11 1h3v3M1 11v3h3" stroke="#303942" /><circle cx="12" cy="12" r="3" stroke="#303942" /><path d="M14 14l3 3" stroke="#303942" strokeWidth="2" /></Icon></button>
            <button aria-label="궤도"><Icon size={18} box={18}><ellipse cx="9" cy="9" rx="8" ry="3" stroke="#303942" /><ellipse cx="9" cy="9" rx="3" ry="8" stroke="#303942" /><path d="M5 10l-2 3 4 1" stroke="#303942" /></Icon></button>
            <button aria-label="ShowMotion"><Icon size={18} box={18}><path d="M1 1h4v3H1zM7 1h4v3H7zM13 1h4v3h-4z" stroke="#364569" /><path d="M2 7h11v10H2z" stroke="#303942" /><path d="M6 9l4 3-4 3z" fill="#303942" stroke="none" /></Icon></button>
        </div>
    )
}

function ViewCube() {
    return (
        <div className="absolute top-6 right-3 flex w-[88px] flex-col items-center text-[12px] text-[#9ba1a8]">
            <div className="relative mt-[6px] flex size-[82px] items-center justify-center rounded-full border-8 border-[#30353f]">
                <button className="flex size-[34px] items-center justify-center border border-[#a6a9ae] bg-[#8f9397] text-[9px] text-[#2b3138]">
                    <span className="flex h-5 w-[22px] items-center justify-center bg-[#9aa3a3] whitespace-nowrap">평면도</span>
                </button>
                <span className="absolute -top-3.5 leading-4">북</span>
                <span className="absolute -bottom-3.5 leading-4">남</span>
                <span className="absolute -left-3 leading-4">서</span>
                <span className="absolute -right-2.5 leading-4">동</span>
            </div>
            <button className="mt-[17px] flex h-[11px] w-8 items-center gap-1 rounded-sm border border-[#8b909b] bg-[#777d89] pl-0.5 text-[8px] text-[#262c38]">
                WCS
                <Icon size={6} box={6}><path d="M0 1h5L2.500 5z" stroke="#a0a5af" /></Icon>
            </button>
        </div>
    )
}

function Drawing() {
    return (
        <main className="relative min-h-0 flex-1 overflow-hidden border-t-4 border-[#2f3643] bg-[#1a1f26]">
            <svg className="absolute inset-0 h-full w-full" aria-label="Floor Plan Sample">
                <g transform="translate(0 -113)">
                    <FloorPlan />
                    <path d="M217 310.500h8v8h-8z" fill="#0a6cf5" />
                    <path d="M225 314.500h3" stroke="#fff" />
                    <path d="M306 311l4 7h-8zM387 310.500l8 4-8 4z" fill="#0a6cf5" />
                    <path d="M507.500 462v30M507.500 497v29M475 494.500h30M510 494.500h30M505.500 492.500h4v4h-4z" fill="none" stroke="#dfe2e5" />
                    <path d="M12.500 618.500v34h34M9.500 649.500h6v6h-6z" fill="none" stroke="#c3c7cc" />
                    <text x="13" y="616" fontSize="13" fill="#c3c7cc">Y</text>
                    <text x="49" y="652" fontSize="13" fill="#c3c7cc">X</text>
                    <path d="M701 407h1v1h-1z" fill="#777" />
                </g>
            </svg>
            <p className="pl-0.5 leading-[18px] text-[#c7ccd2]">[−][평면도][2D 와이어프레임]</p>
            <div className="absolute top-1 right-1.5 flex gap-px">
                <button aria-label="뷰포트 최소화"><Icon><path d="M3 8h6" stroke="#fff" strokeWidth="2" /></Icon></button>
                <button aria-label="뷰포트 복원"><Icon><path d="M2.500 4.500h5v5h-5zM4.500 4V2.500h5v5H8" stroke="#fff" /></Icon></button>
                <button aria-label="뷰포트 닫기"><Icon><path d="M3 3l6 6M9 3L3 9" stroke="#fff" strokeWidth="1.500" /></Icon></button>
            </div>
            <ViewCube />
            <NavBar />
            <div className="absolute right-64 bottom-0 left-64">
                <p className="mb-0.5 ml-10 w-fit bg-[#474b4c] px-px font-['Liberation_Mono','Noto_Sans_CJK_KR',monospace] leading-[11px] whitespace-nowrap text-[#c8cbcb]">
                    명령: 반대 구석 지정 또는 [울타리(F)/윈도우폴리곤(WP)/걸침폴리곤(CP)]:
                </p>
                <div className="flex h-[17px] items-center bg-[#252c36]">
                    <span className="ml-0.5 h-3 w-[3px] border-x border-dotted border-[#d3d7dc]" />
                    <button aria-label="명령행 닫기" className="ml-1"><Icon size={7} box={7}><path d="M0 0l7 7M7 0L0 7" strokeWidth="1.500" /></Icon></button>
                    <button aria-label="사용자화" className="mr-1 ml-[7px]"><Icon size={10}><path d="M1 11l6-6" strokeWidth="2" /><path d="M8 1a3 3 0 1 0 3 3L9 5 7 4z" fill="#d3d7dc" stroke="none" /></Icon></button>
                    <div className="flex h-full min-w-0 flex-1 items-center bg-white pr-1 pl-0.5">
                        <svg width="17" height="8" viewBox="0 0 17 8" fill="none" stroke="#3d444c" aria-hidden="true">
                            <path d="M.500.500h10v7H.500zM2 2l2 2-2 2M5 6h3" /><path d="M12 3h5l-2.500 3z" fill="#3d444c" stroke="none" />
                        </svg>
                        <input aria-label="명령" className="h-full min-w-0 flex-1 bg-transparent px-1 text-[#20262d] outline-none" />
                        <svg width="4" height="3" viewBox="0 0 4 3" aria-hidden="true"><path d="M0 3h4L2 0z" fill="#20262d" /></svg>
                    </div>
                </div>
            </div>
        </main>
    )
}

/* ---------- status bar ---------- */

function StatusButton({ label, on, children }: { label: string, on?: boolean, children: ReactNode }) {
    return (
        <button aria-label={label} className={on ? 'flex h-4 w-4 items-center justify-center bg-[#3f73ad]' : 'flex h-4 w-4 items-center justify-center bg-[#232a34]'}>
            {children}
        </button>
    )
}

function StatusArrow({ label }: { label: string }) {
    return <button aria-label={label} className="flex h-4 w-2 items-center justify-center bg-[#232a34]"><Caret /></button>
}

const person = <path d="M6 1l1 5 4 5-5-3-5 3 4-5z" fill="#e6e8ea" stroke="none" />;

function StatusBar() {
    return (
        <footer className="flex h-5 items-start justify-between bg-[#181e26] whitespace-nowrap">
            <div className="flex items-start pl-2">
                <button className="h-3 w-7 rounded-b-md bg-[#2d3541] leading-3 text-white">모형</button>
                <button className="ml-[3px] h-3 w-10 rounded-b-md bg-[#212832] text-[8px] leading-3 text-[#aab1ba]">Layout1</button>
                <button aria-label="새 배치" className="ml-1.5 flex h-3 w-3 items-center justify-center rounded-b-md bg-[#212832]"><Icon size={6} box={6}><path d="M3 0v6M0 3h6" /></Icon></button>
            </div>
            <div className="flex items-center gap-px pt-0.5">
                <button className="flex h-4 items-center bg-[#232a34] px-0.5 text-white">모형</button>
                <StatusButton label="그리드"><Icon><path d="M3.500 1v10M6.500 1v10M9.500 1v10M1 3.500h11M1 6.500h11M1 9.500h11" /></Icon></StatusButton>
                <StatusButton label="스냅"><Icon><path d="M1 2.500h11M1 6h11M1 9.500h11" strokeDasharray="1 3" strokeWidth="1.500" /></Icon></StatusButton>
                <StatusArrow label="스냅 설정" />
                <StatusButton label="직교"><Icon><path d="M2.500 0v10.500H12M2.500 7h3v3" /></Icon></StatusButton>
                <StatusButton label="극좌표 추적" on><Icon><circle cx="5.500" cy="6.500" r="4.500" /><path d="M5.500 6.500h6M5.500 6.500L10 2" /></Icon></StatusButton>
                <StatusArrow label="극좌표 설정" />
                <StatusButton label="등각투영"><Icon><path d="M6 1v10" stroke="#62a873" /><path d="M2 2l8 8" stroke="#c05560" /></Icon></StatusButton>
                <StatusArrow label="등각투영 설정" />
                <StatusButton label="객체 스냅 추적" on><Icon><path d="M11 1L1 10.500h11" /></Icon></StatusButton>
                <StatusButton label="객체 스냅" on><Icon><path d="M2.500 2.500h8v8h-8z" /><path d="M1 1h3v3H1z" fill="#3f73ad" /></Icon></StatusButton>
                <StatusArrow label="객체 스냅 설정" />
                <StatusButton label="주석 객체 표시" on><Icon>{person}<circle cx="9.500" cy="2.500" r="1.500" /></Icon></StatusButton>
                <StatusButton label="자동 축척"><Icon>{person}<path d="M9 1v4M7 3h4" /></Icon></StatusButton>
                <StatusButton label="주석 축척"><Icon>{person}</Icon></StatusButton>
                <button className="flex h-4 items-center gap-1 bg-[#232a34] px-0.5 text-[8px]">1:1<Caret /></button>
                <StatusButton label="작업공간"><Icon><circle cx="6" cy="6" r="3" strokeWidth="2" /><path d="M6 0v3M6 9v3M0 6h3M9 6h3M2 2l2 2M8 8l2 2M10 2L8 4M4 8l-2 2" strokeWidth="1.500" /></Icon></StatusButton>
                <StatusArrow label="작업공간 설정" />
                <StatusButton label="주석 모니터"><Icon><path d="M6 1v10M1 6h10" strokeWidth="1.500" /></Icon></StatusButton>
                <StatusButton label="객체 분리"><Icon><path d="M1 1h4v4H1zM6 7l-2 4h5z" /><circle cx="9" cy="5" r="2" /></Icon></StatusButton>
                <StatusButton label="하드웨어 가속"><Icon><path d="M1 1h5v4H1z" fill={BLUE} stroke="none" /><path d="M5 4h5v4H5z" fill={GOLD} stroke="none" /><path d="M3 8l3 3 5-6" stroke="#45c070" strokeWidth="2" /></Icon></StatusButton>
                <StatusButton label="화면 정리"><Icon><path d="M.500 1.500h11v9H.500zM3 8l2-2M3 6v2h2M9 4L7 6M7 4h2v2" /></Icon></StatusButton>
                <StatusButton label="사용자화"><Icon><path d="M1 2h11M1 6h11M1 10h11" strokeWidth="1.500" /></Icon></StatusButton>
            </div>
        </footer>
    )
}

function App() {
    return (
        <div className="flex h-screen flex-col overflow-hidden bg-[#181e26] font-['Noto_Sans','Noto_Sans_CJK_KR',sans-serif] text-[9px] text-[#d0d4d9]">
            <Header />
            <Ribbon />
            <FileTabs />
            <Drawing />
            <StatusBar />
        </div>
    )
}

export default App
